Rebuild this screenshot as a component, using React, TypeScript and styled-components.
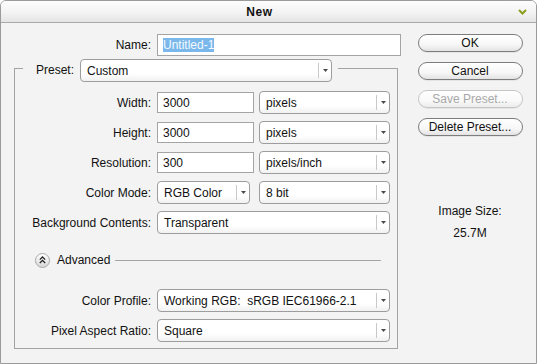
import React from 'react';
import styled, { createGlobalStyle } from 'styled-components';

const GlobalStyle = createGlobalStyle`
  html, body {
    margin: 0;
    padding: 0;
    background: #ffffff;
  }
  body {
    font-family: "Liberation Sans", Arial, sans-serif;
    font-size: 12px;
    color: #111;
  }
  * {
    box-sizing: border-box;
  }
`;

const Window = styled.div`
  width: 537px;
  height: 364px;
  border: 1px solid #9b9b9b;
  border-radius: 6px 6px 0 0;
  background: #f3f3f3;
  display: flex;
  flex-direction: column;
  overflow: hidden;
`;

const TitleBar = styled.div`
  flex: none;
  height: 22px;
  display: flex;
  align-items: center;
  border-bottom: 1px solid #a9a9a9;
  background: linear-gradient(#fdfdfd, #f3f3f3 55%, #e4e4e4);
`;

const Title = styled.div`
  flex: 1;
  text-align: center;
  font-weight: bold;
  font-size: 12px;
  letter-spacing: 0.6px;
  color: #111;
`;

const Collapse = styled.svg`
  flex: none;
  margin-right: 9px;
  margin-top: 1px;
`;

const Body = styled.div`
  flex: 1;
  display: flex;
`;

const LeftCol = styled.div`
  width: 403px;
  flex: none;
  padding-top: 11px;
`;

const NameRow = styled.div`
  display: flex;
  align-items: center;
  height: 22px;
`;

const Label = styled.div<{ $w: number }>`
  width: ${p => p.$w}px;
  flex: none;
  text-align: right;
  margin-right: 6px;
  white-space: nowrap;
`;

const Field = styled.div<{ $w: number; $h?: number }>`
  width: ${p => p.$w}px;
  height: ${p => p.$h ?? 21}px;
  flex: none;
  border: 1px solid #a4a4a4;
  background: #ffffff;
  padding-left: 5px;
  display: flex;
  align-items: center;
  white-space: nowrap;
`;

const Selected = styled.span`
  background: #7ab7eb;
  color: #f4faff;
  line-height: 14px;
`;

const Group = styled.div`
  margin: 3px 0 0 13px;
  width: 384px;
`;

const GroupHeader = styled.div`
  display: flex;
  align-items: flex-start;
  height: 23px;
`;

const Corner = styled.div`
  width: 9px;
  height: 14px;
  margin-top: 9px;
  border-top: 1px solid #a3a3a3;
  border-left: 1px solid #a3a3a3;
  flex: none;
`;

const PresetLabel = styled.div`
  margin-left: 13px;
  margin-right: 6px;
  line-height: 23px;
`;

const EdgeLine = styled.div`
  flex: 1;
  height: 14px;
  margin: 9px 0 0 6px;
  border-top: 1px solid #a3a3a3;
  border-right: 1px solid #a3a3a3;
`;

const GroupBody = styled.div`
  border: 1px solid #a3a3a3;
  border-top: none;
  padding: 9px 0 6px 0;
  display: flex;
  flex-direction: column;
  gap: 7px;
`;

const Row = styled.div`
  display: flex;
  align-items: center;
  height: 23px;
`;

const Dropdown = styled.div<{ $w: number; $ml?: number }>`
  width: ${p => p.$w}px;
  height: 23px;
  flex: none;
  margin-left: ${p => p.$ml ?? 0}px;
  border: 1px solid #9d9d9d;
  border-radius: 4px;
  background: linear-gradient(#ffffff, #ffffff 65%, #f1f1f1);
  display: flex;
  align-items: center;
`;

const DropValue = styled.span`
  flex: 1;
  padding-left: 6px;
  white-space: pre;
  overflow: hidden;
`;

const DropArrow = styled.span`
  width: 13px;
  height: 15px;
  flex: none;
  border-left: 1px solid #c9c9c9;
  display: flex;
  align-items: center;
  justify-content: center;
`;

const AdvancedRow = styled.div`
  display: flex;
  align-items: center;
  height: 20px;
  margin: 9px 0 12px 0;
  padding-left: 20px;
`;

const RoundToggle = styled.span`
  width: 15px;
  height: 15px;
  flex: none;
  border-radius: 50%;
  border: 1px solid #a8a8a8;
  background: linear-gradient(#ffffff, #e9e9e9 60%, #d6d6d6);
  display: flex;
  align-items: center;
  justify-content: center;
`;

const AdvancedText = styled.span`
  margin-left: 7px;
`;

const Rule = styled.div`
  flex: 1;
  height: 1px;
  background: #a3a3a3;
  margin: 0 16px 0 5px;
`;

const RightCol = styled.div`
  flex: 1;
  display: flex;
  flex-direction: column;
  align-items: center;
  padding-top: 11px;
`;

const ButtonStack = styled.div`
  display: flex;
  flex-direction: column;
  gap: 10px;
`;

const Button = styled.button`
  width: 105px;
  height: 18px;
  padding: 0;
  border-radius: 9px;
  border: 1px solid #7d7d7d;
  background: linear-gradient(#ffffff, #f7f7f7 60%, #e3e3e3);
  box-shadow: 0 1px 0 rgba(0, 0, 0, 0.06);
  font-family: "Liberation Sans", Arial, sans-serif;
  font-size: 12px;
  color: #111;
  line-height: 16px;

  &:disabled {
    border-color: #c6c6c6;
    color: #a9a9a9;
    background: linear-gradient(#ffffff, #f9f9f9 60%, #ececec);
  }
`;

const Info = styled.div`
  margin-top: 68px;
  display: flex;
  flex-direction: column;
  align-items: center;
  gap: 8px;
  line-height: 14px;
`;

const Arrow = () => (
  <svg width="5" height="3" viewBox="0 0 5 3">
    <path d="M0 0 H5 L2.5 3 Z" fill="#4a4a4a" />
  </svg>
);

const Select: React.FC<{ w: number; value: string; ml?: number }> = ({ w, value, ml }) => (
  <Dropdown $w={w} $ml={ml}>
    <DropValue>{value}</DropValue>
    <DropArrow>
      <Arrow />
    </DropArrow>
  </Dropdown>
);

const rows = [
  { label: 'Width:', value: '3000', unit: 'pixels' },
  { label: 'Height:', value: '3000', unit: 'pixels' },
  { label: 'Resolution:', value: '300', unit: 'pixels/inch' },
];

export default function App() {
  return (
    <>
      <GlobalStyle />
      <Window>
        <TitleBar>
          <Title>New</Title>
          <Collapse width="9" height="6" viewBox="0 0 9 6">
            <polyline points="1,1 4.5,4.5 8,1" fill="none" stroke="#8b9d1b" strokeWidth="2" />
          </Collapse>
        </TitleBar>
        <Body>
          <LeftCol>
            <NameRow>
              <Label $w={150}>Name:</Label>
              <Field $w={244} $h={22}>
                <Selected>Untitled-1</Selected>
              </Field>
            </NameRow>
            <Group>
              <GroupHeader>
                <Corner />
                <PresetLabel>Preset:</PresetLabel>
                <Select w={252} value="Custom" />
                <EdgeLine />
              </GroupHeader>
              <GroupBody>
                {rows.map(r => (
                  <Row key={r.label}>
                    <Label $w={136}>{r.label}</Label>
                    <Field $w={97}>{r.value}</Field>
                    <Select w={131} ml={5} value={r.unit} />
                  </Row>
                ))}
                <Row>
                  <Label $w={136}>Color Mode:</Label>
                  <Select w={93} value="RGB Color" />
                  <Select w={131} ml={9} value="8 bit" />
                </Row>
                <Row>
                  <Label $w={136}>Background Contents:</Label>
                  <Select w={233} value="Transparent" />
                </Row>
                <AdvancedRow>
                  <RoundToggle>
                    <svg width="7" height="8" viewBox="0 0 7 8">
                      <polyline points="0.8,3.6 3.5,1 6.2,3.6" fill="none" stroke="#222" strokeWidth="1.3" />
                      <polyline points="0.8,7 3.5,4.4 6.2,7" fill="none" stroke="#222" strokeWidth="1.3" />
                    </svg>
                  </RoundToggle>
                  <AdvancedText>Advanced</AdvancedText>
                  <Rule />
                </AdvancedRow>
                <Row>
                  <Label $w={136}>Color Profile:</Label>
                  <Select w={233} value="Working RGB:  sRGB IEC61966-2.1" />
                </Row>
                <Row>
                  <Label $w={136}>Pixel Aspect Ratio:</Label>
                  <Select w={233} value="Square" />
                </Row>
              </GroupBody>
            </Group>
          </LeftCol>
          <RightCol>
            <ButtonStack>
              <Button>OK</Button>
              <Button>Cancel</Button>
              <Button disabled>Save Preset...</Button>
              <Button>Delete Preset...</Button>
            </ButtonStack>
            <Info>
              <span>Image Size:</span>
              <span>25.7M</span>
            </Info>
          </RightCol>
        </Body>
      </Window>
    </>
  );
}
